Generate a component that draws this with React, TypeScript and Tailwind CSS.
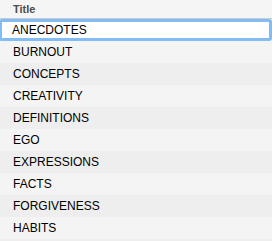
const titles = [
  "ANECDOTES",
  "BURNOUT",
  "CONCEPTS",
  "CREATIVITY",
  "DEFINITIONS",
  "EGO",
  "EXPRESSIONS",
  "FACTS",
  "FORGIVENESS",
  "HABITS",
  "",
];

export default function App() {
  return (
    <div className="w-[272px] h-[241px] overflow-hidden bg-[#f3f3f3] font-['Liberation_Sans',Arial,sans-serif]">
      {/* Column header */}
      <div className="h-[19px] bg-[#f5f5f5] border-b border-[#cbcbcb] flex items-center pl-[13px]">
        <span className="text-[11px] font-bold text-[#4d4d4d] leading-none">Title</span>
      </div>

      {/* Rows */}
      <div className="flex flex-col">
        {titles.map((title, index) =>
          index === 0 ? (
            <div
              key={index}
              className="h-[22px] bg-white border-[3px] border-[#82bcf4] rounded-[3px] flex items-center pl-[10px] -ml-[1px]"
            >
              <span className="text-[12px] text-black leading-none">{title}</span>
            </div>
          ) : (
            <div
              key={index}
              className={
                index % 2 === 1
                  ? "h-[22px] bg-[#f4f4f4] flex items-center pl-[13px]"
                  : "h-[22px] bg-[#eeeeee] flex items-center pl-[13px]"
              }
            >
              <span className="text-[12px] text-black leading-none">{title}</span>
            </div>
          )
        )}
      </div>
    </div>
  );
}
